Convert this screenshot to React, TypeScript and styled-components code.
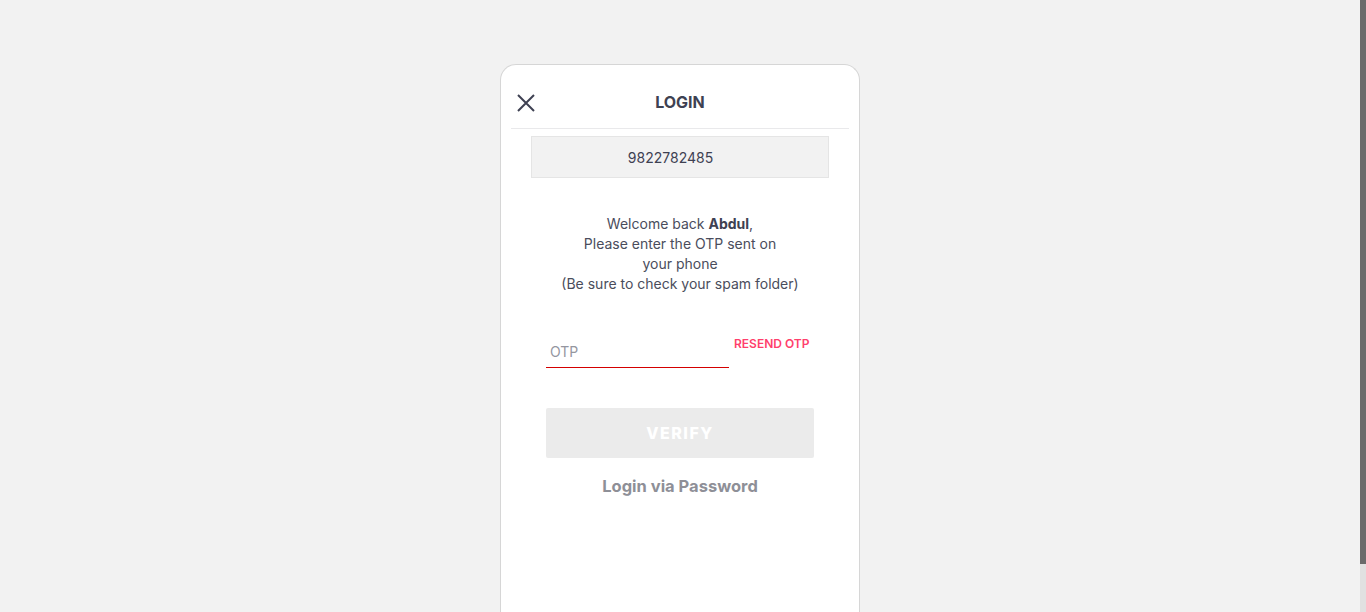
import React from "react";
import styled, { createGlobalStyle } from "styled-components";

const GlobalStyle = createGlobalStyle`
  html, body {
    margin: 0;
    padding: 0;
    background: #f2f2f2;
    font-family: Inter, "Noto Sans", "Liberation Sans", sans-serif;
  }
  ::-webkit-scrollbar {
    width: 6px;
  }
  ::-webkit-scrollbar-track {
    background: #e1e1e1;
  }
  ::-webkit-scrollbar-thumb {
    background: #6b6b6b;
  }
`;

const Page = styled.div`
  display: flex;
  justify-content: center;
  padding-top: 64px;
  padding-right: 6px;
  box-sizing: border-box;
`;

const ScrollTrack = styled.div`
  position: fixed;
  top: 0;
  right: 0;
  width: 6px;
  height: 100vh;
  background: #e1e1e1;
  display: flex;
  flex-direction: column;
`;

const ScrollThumb = styled.div`
  height: 564px;
  background: #6b6b6b;
`;

const Card = styled.div`
  width: 360px;
  min-height: 600px;
  box-sizing: border-box;
  background: #fff;
  border: 1px solid #d6d6d6;
  border-bottom: none;
  border-radius: 16px 16px 0 0;
  display: flex;
  flex-direction: column;
  align-items: center;
`;

const Header = styled.div`
  position: relative;
  width: 100%;
  height: 63px;
  display: flex;
  align-items: center;
  justify-content: center;
`;

const CloseButton = styled.button`
  position: absolute;
  left: 13px;
  top: 26px;
  width: 24px;
  height: 24px;
  padding: 0;
  border: none;
  background: transparent;
  display: flex;
  align-items: center;
  justify-content: center;
  cursor: pointer;
`;

const Title = styled.div`
  font-size: 16px;
  font-weight: 700;
  color: #3e4152;
  margin-top: 10px;
`;

const Divider = styled.div`
  width: calc(100% - 20px);
  height: 1px;
  background: #e9e9eb;
`;

const PhoneBox = styled.div`
  margin-top: 7px;
  width: 298px;
  height: 42px;
  box-sizing: border-box;
  padding-right: 19px;
  background: #f2f2f2;
  border: 1px solid #e5e5e5;
  display: flex;
  align-items: center;
  justify-content: center;
  font-size: 14px;
  color: #3e4152;
`;

const Message = styled.p`
  margin: 36px 0 0;
  font-size: 14px;
  line-height: 20px;
  color: #4a4d5c;
  text-align: center;
  b {
    font-weight: 700;
    color: #3e4152;
  }
`;

const OtpRow = styled.div`
  margin-top: 42px;
  width: 268px;
  display: flex;
  align-items: flex-start;
  gap: 5px;
`;

const OtpInput = styled.input`
  width: 183px;
  height: 32px;
  box-sizing: border-box;
  border: none;
  border-bottom: 1px solid #d40000;
  outline: none;
  padding: 0 4px;
  font-family: inherit;
  font-size: 14px;
  color: #3e4152;
  &::placeholder {
    color: #94969f;
  }
`;

const Resend = styled.button`
  border: none;
  background: transparent;
  padding: 0;
  margin-top: 1px;
  font-family: inherit;
  font-size: 12px;
  line-height: 14px;
  font-weight: 600;
  color: #ff3f6c;
  cursor: pointer;
`;

const VerifyButton = styled.button`
  margin-top: 40px;
  width: 268px;
  height: 50px;
  border: none;
  border-radius: 2px;
  background: #ebebeb;
  color: #fff;
  font-family: inherit;
  font-size: 16px;
  font-weight: 800;
  letter-spacing: 1.5px;
`;

const PasswordLink = styled.button`
  margin-top: 18px;
  border: none;
  background: transparent;
  padding: 0;
  font-family: inherit;
  font-size: 16.5px;
  line-height: 20px;
  font-weight: 700;
  color: #8e8f97;
  cursor: pointer;
`;

export default function App() {
  return (
    <>
      <GlobalStyle />
      <Page>
        <Card>
          <Header>
            <CloseButton aria-label="Close">
              <svg width="20" height="20" viewBox="0 0 20 20">
                <path d="M2 2 L18 18 M18 2 L2 18" stroke="#3e4152" strokeWidth="2" fill="none" />
              </svg>
            </CloseButton>
            <Title>LOGIN</Title>
          </Header>
          <Divider />
          <PhoneBox>9822782485</PhoneBox>
          <Message>
            Welcome back <b>Abdul</b>,
            <br />
            Please enter the OTP sent on
            <br />
            your phone
            <br />
            (Be sure to check your spam folder)
          </Message>
          <OtpRow>
            <OtpInput placeholder="OTP" />
            <Resend>RESEND OTP</Resend>
          </OtpRow>
          <VerifyButton>VERIFY</VerifyButton>
          <PasswordLink>Login via Password</PasswordLink>
        </Card>
      </Page>
      <ScrollTrack>
        <ScrollThumb />
      </ScrollTrack>
    </>
  );
}
